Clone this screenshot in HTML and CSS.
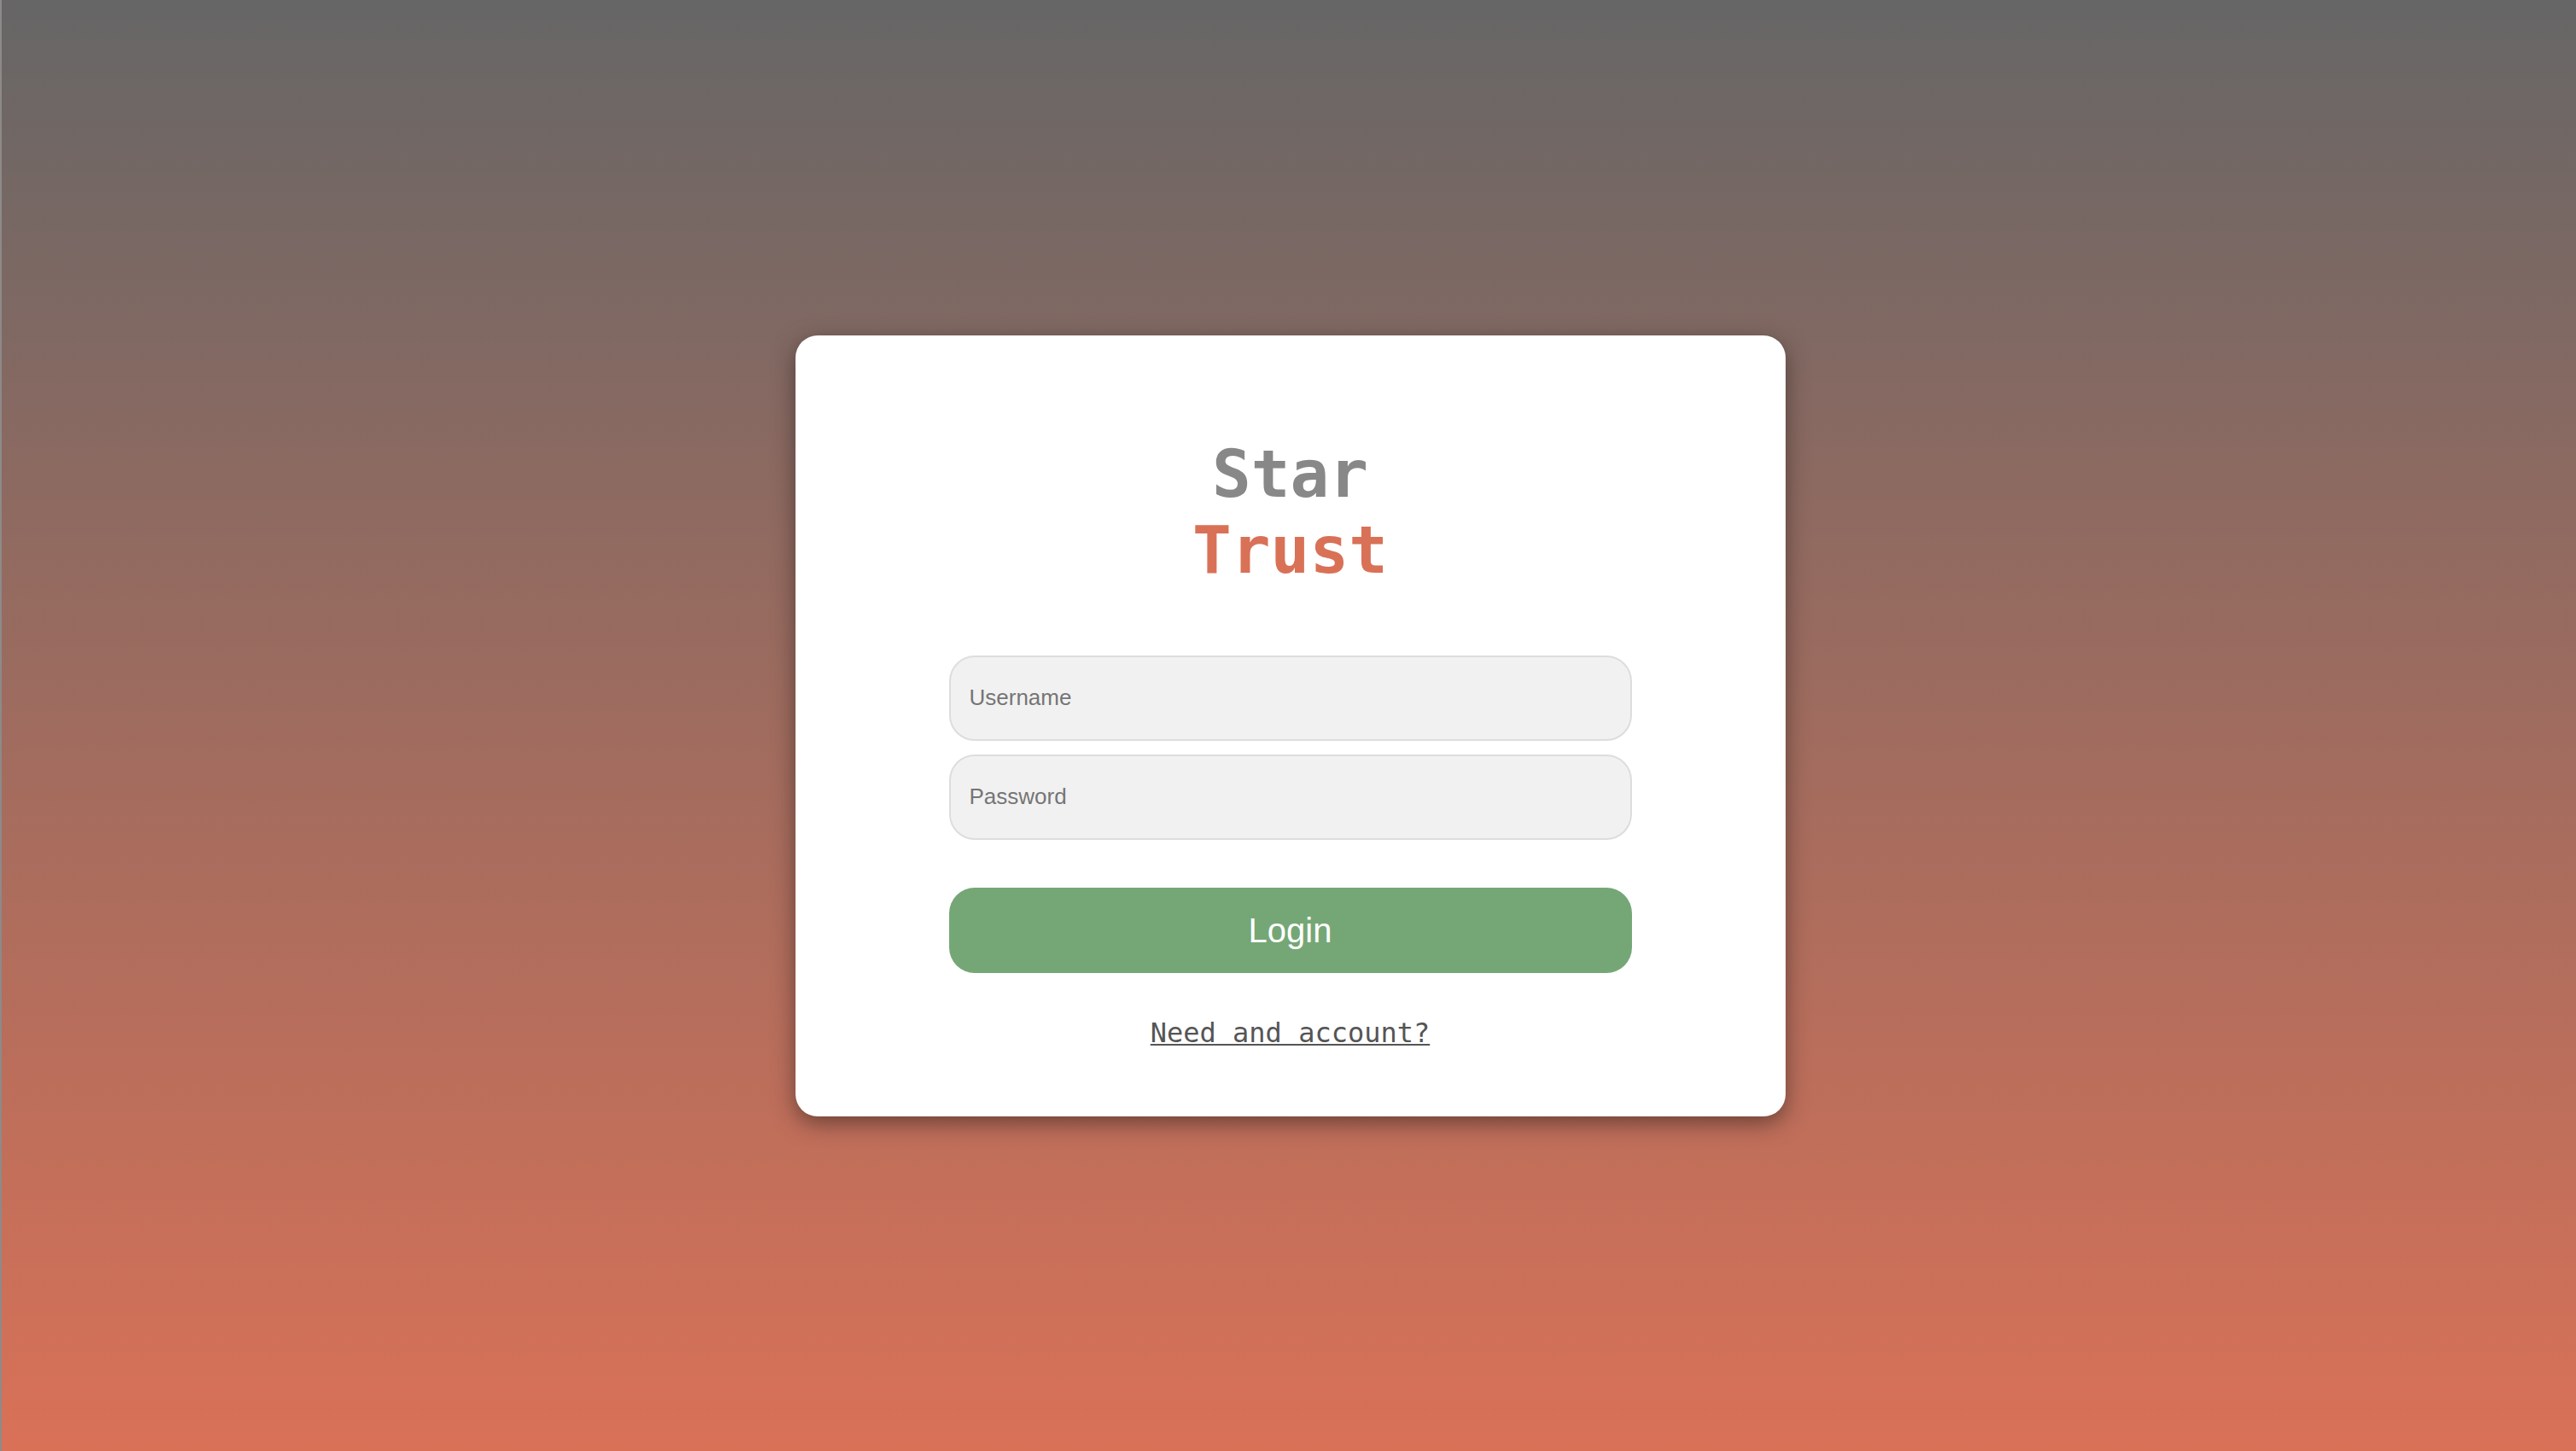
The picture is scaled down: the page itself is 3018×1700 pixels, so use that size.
FILE: index.html
```html
<!DOCTYPE html>
<html lang="en">
<head>
<meta charset="utf-8">
<title>Star Trust — Login</title>
<link rel="stylesheet" href="styles.css">
</head>
<body>
<main class="page">
  <form class="card" onsubmit="return false;">
    <h1 class="brand">
      <span class="brand-star">Star</span>
      <span class="brand-trust">Trust</span>
    </h1>
    <div class="fields">
      <input class="field" type="text" placeholder="Username">
      <input class="field" type="password" placeholder="Password">
    </div>
    <button class="login" type="submit">Login</button>
    <a class="signup" href="#">Need and account?</a>
  </form>
</main>
</body>
</html>
```

FILE: styles.css
```css
* {
  box-sizing: border-box;
}

html, body {
  margin: 0;
  padding: 0;
  height: 100%;
}

body {
  background: linear-gradient(to bottom, #666666 0%, #d97157 100%);
  border-left: 2px solid #8d8a89;
  font-family: "Liberation Sans", Arial, sans-serif;
}

.page {
  height: 100vh;
  padding-left: 3px;
  display: flex;
  align-items: center;
  justify-content: center;
}

.card {
  width: 1160px;
  background: #ffffff;
  border-radius: 26px;
  box-shadow: 0 8px 26px rgba(40, 30, 28, 0.55);
  padding: 118px 180px 79px;
  display: flex;
  flex-direction: column;
}

.brand {
  margin: 0;
  font-family: "DejaVu Sans Mono", "Liberation Mono", monospace;
  font-weight: bold;
  font-size: 76px;
  line-height: normal;
  text-align: center;
  display: flex;
  flex-direction: column;
  align-items: center;
}

.brand-star {
  color: #888888;
}

.brand-trust {
  color: #d97157;
}

.fields {
  margin-top: 79px;
  display: flex;
  flex-direction: column;
  gap: 16px;
}

.field {
  width: 100%;
  height: 100px;
  border: 2px solid #dddddd;
  border-radius: 30px;
  background: #f1f1f1;
  padding: 0 22px;
  font-family: "Liberation Sans", Arial, sans-serif;
  font-size: 26px;
  color: #333333;
  outline: none;
}

.field::placeholder {
  color: #757575;
}

.login {
  margin-top: 56px;
  width: 100%;
  height: 100px;
  border: none;
  border-radius: 30px;
  background: #75a776;
  color: #ffffff;
  font-family: "Liberation Sans", Arial, sans-serif;
  font-size: 40px;
  padding-top: 2px;
  cursor: pointer;
}

.signup {
  margin-top: 51px;
  align-self: center;
  font-family: "DejaVu Sans Mono", "Liberation Mono", monospace;
  font-size: 32px;
  line-height: normal;
  color: #555555;
  text-decoration: underline;
  text-decoration-thickness: 2px;
  text-underline-offset: 2px;
}
```
